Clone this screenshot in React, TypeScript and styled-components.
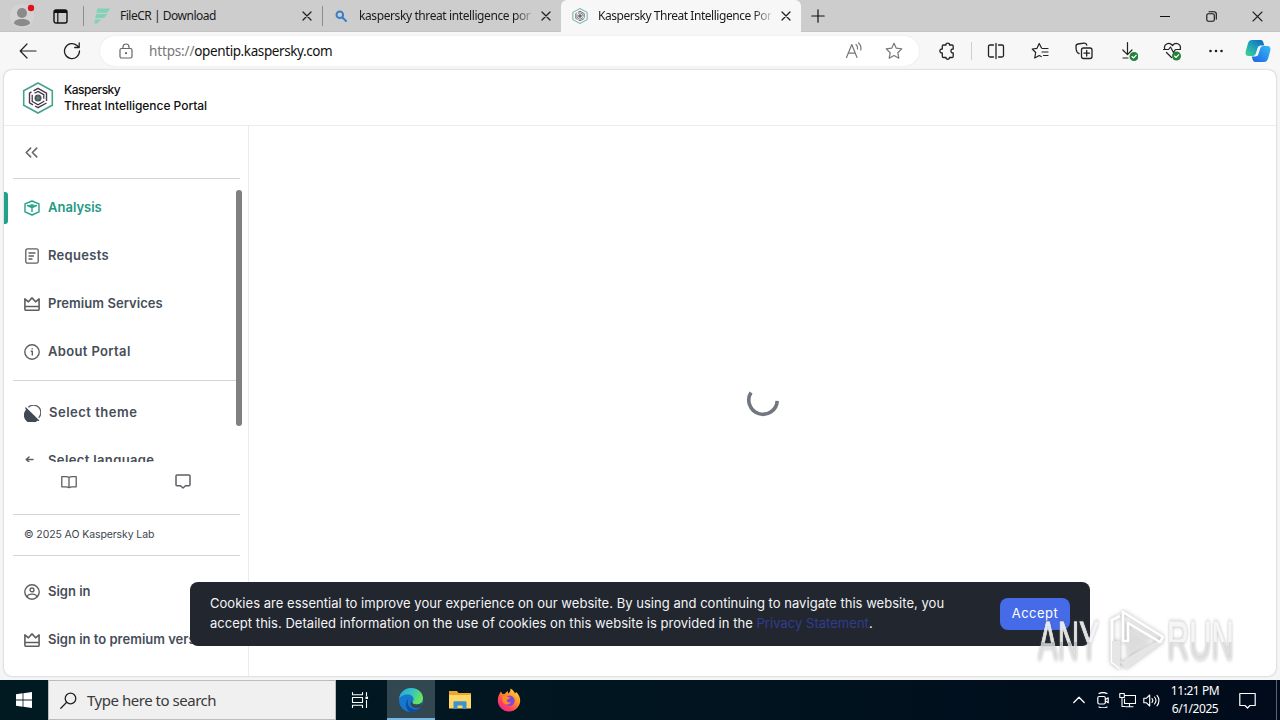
import type { ReactNode } from "react";
import styled, { createGlobalStyle, css } from "styled-components";
import { ChevronsLeft } from "lucide-react";

const GlobalStyle = createGlobalStyle`
  * {
    box-sizing: border-box;
  }
  body {
    margin: 0;
    overflow: hidden;
    font-family: "Open Sans", sans-serif;
  }
  svg {
    display: block;
    flex-shrink: 0;
  }
`;

const UI_FONT = `"Noto Sans", "Open Sans", sans-serif`;
const SITE_FONT = `Inter, sans-serif`;

const Screen = styled.div`
  position: relative;
  display: flex;
  flex-direction: column;
  width: 1280px;
  height: 720px;
  overflow: hidden;
  background: #f4f5f6;
`;

/* ---------- browser tabs ---------- */

const TabStrip = styled.div`
  display: flex;
  height: 32px;
  flex-shrink: 0;
  background: #cdcdcd;
  border-bottom: 1px solid #c3c3c3;
`;

const StripButton = styled.div<{ $width: number }>`
  display: flex;
  align-items: center;
  justify-content: center;
  width: ${({ $width }) => $width}px;
  height: 32px;
`;

const WorkspaceButton = styled(StripButton)`
  padding-right: 7px;
`;

const Tab = styled.div<{ $active?: boolean }>`
  display: flex;
  align-items: center;
  width: ${({ $active }) => ($active ? 240 : 239)}px;
  height: 32px;
  padding: 0 10px 0 11px;
  position: relative;
  ${({ $active }) =>
    $active &&
    css`
      background: #f7f7f7;
      border-radius: 6px 6px 0 0;
    `}
`;

const TabDivider = styled.span`
  position: absolute;
  left: 0;
  top: 6px;
  width: 1px;
  height: 20px;
  background: #8d8d8d;
`;

const TabTitle = styled.span<{ $spacing: number; $fade?: boolean }>`
  flex: 1;
  margin: 0 10px 0 10px;
  overflow: hidden;
  white-space: nowrap;
  font-family: ${UI_FONT};
  font-size: 12px;
  line-height: 18px;
  letter-spacing: ${({ $spacing }) => $spacing}px;
  color: #1a1a1a;
  ${({ $fade }) =>
    $fade &&
    css`
      mask-image: linear-gradient(to right, #000 155px, transparent 177px);
    `}
`;

const WindowControls = styled.div`
  display: flex;
  margin-left: auto;
`;

/* ---------- address row ---------- */

const Toolbar = styled.div`
  display: flex;
  align-items: center;
  height: 38px;
  flex-shrink: 0;
  padding-left: 6px;
  background: #f7f7f7;
`;

const ToolButton = styled.div<{ $width?: number }>`
  display: flex;
  align-items: center;
  justify-content: center;
  width: ${({ $width = 44 }) => $width}px;
  height: 30px;
  flex-shrink: 0;
`;

const AddressBar = styled.div`
  display: flex;
  align-items: center;
  width: 819px;
  height: 30px;
  flex-shrink: 0;
  margin: 0 6px;
  padding: 0 16px 0 18px;
  border-radius: 15px;
  background: #fff;
  box-shadow: 0 0 2px #e2e2e2;
`;

const Url = styled.span`
  flex: 1;
  margin-left: 15px;
  font-family: ${UI_FONT};
  font-size: 13.5px;
  line-height: 20px;
  letter-spacing: -0.4px;
  color: #111;
`;

const UrlScheme = styled.span`
  color: #777;
  letter-spacing: -0.15px;
`;

const AddressActions = styled.div`
  display: flex;
  gap: 22px;
`;

const ToolDivider = styled.span`
  width: 1px;
  height: 18px;
  margin: 0 2px 0 2px;
  flex-shrink: 0;
  background: #cfcfcf;
`;

/* ---------- page ---------- */

const Page = styled.div`
  display: flex;
  flex-direction: column;
  width: 1272px;
  height: 606px;
  margin: 0 4px 4px;
  flex-shrink: 0;
  overflow: hidden;
  border-radius: 8px;
  background: #fff;
  box-shadow: 0 0 2px #a9a9a9;
`;

const PageHeader = styled.header`
  display: flex;
  align-items: center;
  gap: 10px;
  height: 56px;
  padding-left: 18px;
  border-bottom: 1px solid #ececec;
`;

const Brand = styled.div`
  display: flex;
  flex-direction: column;
`;

const BrandLine = styled.span<{ $spacing: number }>`
  font-family: ${SITE_FONT};
  font-size: 12px;
  font-weight: 500;
  line-height: 16px;
  letter-spacing: ${({ $spacing }) => $spacing}px;
  color: #111;
`;

const PageBody = styled.div`
  display: flex;
  flex: 1;
  min-height: 0;
`;

const Sidebar = styled.aside`
  display: flex;
  flex-direction: column;
  width: 245px;
  border-right: 1px solid #ececec;
`;

const Collapse = styled.div`
  display: flex;
  align-items: center;
  height: 52px;
  padding-left: 17px;
  color: #666;
`;

const Rule = styled.hr`
  width: 227px;
  height: 1px;
  flex-shrink: 0;
  margin: 0 0 0 9px;
  border: none;
  background: #d3d5d7;
`;

const NavScroll = styled.nav`
  position: relative;
  height: 283px;
  flex-shrink: 0;
  padding-top: 5px;
  overflow: hidden;
`;

const ScrollThumb = styled.span`
  position: absolute;
  right: 6px;
  top: 11px;
  width: 6px;
  height: 236px;
  border-radius: 3px;
  background: #808080;
`;

const NavGroup = styled.div<{ $padding: string }>`
  padding: ${({ $padding }) => $padding};
`;

const NavRow = styled.div<{ $active?: boolean }>`
  position: relative;
  display: flex;
  align-items: center;
  gap: 8px;
  height: 48px;
  padding-left: 20px;
  white-space: nowrap;
  color: ${({ $active }) => ($active ? "#1fa28a" : "#5c5f64")};

  ${({ $active }) =>
    $active &&
    css`
      &::before {
        content: "";
        position: absolute;
        left: 0;
        top: 8px;
        width: 4px;
        height: 32px;
        border-radius: 0 3px 3px 0;
        background: #1fa28a;
      }
    `}
`;

const NavLabel = styled.span<{ $active?: boolean; $spacing?: number }>`
  margin-top: -3px;
  font-family: ${SITE_FONT};
  font-size: 13px;
  font-weight: 600;
  line-height: 20px;
  letter-spacing: ${({ $spacing = 0 }) => $spacing}px;
  color: ${({ $active }) => ($active ? "#239a85" : "#464e58")};
`;

const QuickLinks = styled.div`
  display: flex;
  justify-content: space-between;
  height: 52px;
  padding: 12px 57px 0;
  color: #5c5f64;
`;

const Copyright = styled.div`
  height: 40px;
  padding-left: 20px;
  font-family: ${SITE_FONT};
  font-size: 10.5px;
  line-height: 39px;
  letter-spacing: -0.1px;
  color: #3e4650;
`;

const Main = styled.main`
  display: flex;
  flex: 1;
  align-items: center;
  justify-content: center;
  padding-top: 3px;
`;

/* ---------- overlays ---------- */

const CookieBanner = styled.div`
  position: absolute;
  left: 190px;
  top: 582px;
  display: flex;
  align-items: center;
  justify-content: space-between;
  width: 900px;
  height: 64px;
  padding: 0 20px;
  border-radius: 8px;
  background: #22272f;
`;

const CookieText = styled.div`
  padding-bottom: 2px;
  font-family: ${SITE_FONT};
  font-size: 13px;
  line-height: 20px;
  white-space: nowrap;
  color: #f3f4f6;
`;

const CookieLine = styled.div<{ $spacing: number }>`
  letter-spacing: ${({ $spacing }) => $spacing}px;
`;

const CookieLink = styled.span`
  color: #303c8f;
`;

const AcceptButton = styled.button`
  width: 70px;
  height: 32px;
  padding: 0 0 3px;
  border: none;
  border-radius: 8px;
  background: #456be9;
  font-family: ${SITE_FONT};
  font-size: 13px;
  font-weight: 400;
  letter-spacing: 0.5px;
  color: #fff;
`;

const Watermark = styled.div`
  position: absolute;
  left: 1038px;
  top: 608px;
  display: flex;
  align-items: center;
  width: 196px;
  height: 66px;
`;

const WatermarkWord = styled.div<{ $scale: number }>`
  width: 120px;
  white-space: nowrap;
  font-family: "Liberation Sans", sans-serif;
  font-size: 53px;
  line-height: 66px;
  color: transparent;
  background: linear-gradient(rgba(255, 255, 255, 0.85) 51%, rgba(226, 226, 226, 0.75) 51%);
  background-clip: text;
  -webkit-text-stroke: 1px rgba(240, 240, 240, 0.6);
  filter: drop-shadow(0 0 2px rgba(90, 90, 90, 0.5));
  transform: scaleX(${({ $scale }) => $scale});
  transform-origin: left center;
`;

const WatermarkSlot = styled.span<{ $width: number }>`
  width: ${({ $width }) => $width}px;
  flex-shrink: 0;
`;

/* ---------- taskbar ---------- */

const Taskbar = styled.div`
  display: flex;
  height: 40px;
  flex-shrink: 0;
  background: linear-gradient(to right, #011a22, #011520 50%, #010b1b);
`;

const TaskButton = styled.div<{ $active?: boolean; $gap?: number }>`
  display: flex;
  align-items: center;
  justify-content: center;
  width: 48px;
  height: 40px;
  margin-left: ${({ $gap = 0 }) => $gap}px;
  ${({ $active }) =>
    $active &&
    css`
      background: #334750;
      box-shadow: inset 0 -2px #78b8e6;
    `}
`;

const SearchBox = styled.div`
  display: flex;
  align-items: center;
  gap: 10px;
  width: 288px;
  height: 40px;
  padding-left: 11px;
  border: 1px solid #bcbcbc;
  background: #f0f0f0;
  font-family: ${UI_FONT};
  font-size: 15px;
  letter-spacing: -0.47px;
  color: #3a3a3a;
`;

const Tray = styled.div`
  display: flex;
  align-items: center;
  margin-left: auto;
  color: #fff;
`;

const TrayIcon = styled.div`
  display: flex;
  align-items: center;
  justify-content: center;
  width: 24px;
`;

const Clock = styled.div`
  width: 64px;
  text-align: center;
  font-family: ${UI_FONT};
  font-size: 12px;
  line-height: 18px;
  letter-spacing: -0.45px;
`;

const ShowDesktop = styled.div`
  width: 4px;
  height: 40px;
  margin-left: 5px;
  border-left: 1px solid #596471;
`;

/* ---------- icons ---------- */

type StrokeProps = {
  size?: number;
  width?: number;
  color?: string;
  children: ReactNode;
};

const Stroke = ({ size = 18, width = 1.2, color = "currentColor", children }: StrokeProps) => (
  <svg
    width={size}
    height={size}
    viewBox={`0 0 ${size} ${size}`}
    fill="none"
    stroke={color}
    strokeWidth={width}
    strokeLinecap="round"
    strokeLinejoin="round"
  >
    {children}
  </svg>
);

const CloseIcon = ({ size = 8, width = 1.3 }: { size?: number; width?: number }) => (
  <Stroke size={size + 2} width={width} color="#222">
    <path d={`M1 1l${size} ${size}M${size + 1} 1l-${size} ${size}`} />
  </Stroke>
);

const KasperskyLogo = ({ size }: { size: number }) => (
  <svg width={size} height={size} viewBox="0 0 32 32" fill="none">
    <path d="M16 1l14.3 7.7v14.6L16 31 1.7 23.3V8.7z" stroke="#45a28b" strokeWidth="1.6" />
    <path
      d="M11.5 8.8L16 6.3l8.5 4.800v8M24.5 21L16 25.7l-3-1.700M11 22.900l-3.500-2v-9.800l2-1.200"
      stroke="#4a3a4c"
      strokeWidth="1.4"
    />
    <path
      d="M12.5 11.200L16 9.400l5.800 3.300v4M21.800 18.800v.6L16 22.700l-5.800-3.300v-6.700"
      stroke="#35303c"
      strokeWidth="1.2"
    />
    <circle cx="16" cy="16" r="3.500" fill="#47504f" />
    <path d="M16 13v6M13.500 14.500l5 3M18.500 14.500l-5 3" stroke="#8fa39d" strokeWidth=".5" />
  </svg>
);

const ProfileIcon = () => (
  <svg width="26" height="26" viewBox="0 0 26 26">
    <circle cx="13" cy="13" r="12" fill="#d3d3d3" />
    <circle cx="13" cy="10" r="5" fill="#8a8a8a" />
    <path d="M5 20.500c0-3 3-4.500 8-4.500s8 1.500 8 4.500c-2 2-5 2.700-8 2.700s-6-.7-8-2.700z" fill="#8a8a8a" />
    <circle cx="22" cy="5" r="3.200" fill="#e0101c" />
  </svg>
);

const WorkspaceIcon = () => (
  <svg width="15" height="15" viewBox="0 0 15 15">
    <rect x="1" y="1" width="13" height="13" rx="2" fill="none" stroke="#111" strokeWidth="1.4" />
    <path d="M1 4V3c0-1.300.7-2 2-2h9c1.300 0 2 .7 2 2v1z" fill="#111" />
    <path d="M4.800 4v10" stroke="#111" strokeWidth="1.2" />
  </svg>
);

const CrownIcon = () => (
  <Stroke size={16} width={1.6}>
    <path d="M.9 10.500V2.900l3.500 2.900L8 1.900l3.600 3.900 3.500-2.900v7.600zM.9 10.500v2.700c0 .7.400 1.100 1.100 1.100h12c.7 0 1.100-.4 1.100-1.100v-2.700" />
  </Stroke>
);

const AnalysisIcon = () => (
  <Stroke size={16} width={1.4}>
    <path d="M8 1l7 2.800v8.100L8 15l-7-3.100V3.800z" />
    <path d="M3.500 5.500L8 7.500l4.500-2M8 7.500v4" />
    <path d="M5.500 5.300L8 4.400l2.500.9L8 6.500z" fill="currentColor" strokeWidth=".6" />
  </Stroke>
);

const RequestsIcon = () => (
  <Stroke size={16} width={1.3}>
    <rect x="1.800" y=".8" width="12.400" height="14.400" rx="1.800" />
    <path d="M5 5h6M5 8h4.500M5 11h3" />
  </Stroke>
);

const InfoIcon = () => (
  <Stroke size={16} width={1.4}>
    <circle cx="8" cy="8" r="7.200" />
    <path d="M7.300 7.300H8.300V11M8.200 4.700v.2" />
  </Stroke>
);

const ThemeIcon = () => (
  <svg width="17" height="17" viewBox="0 0 17 17" fill="none">
    <path d="M4.300 2.300A7.300 7.300 0 0 1 14.700 12.700" stroke="#5c6066" strokeWidth="1.300" />
    <path d="M1.600 2l13.800 13.600-1 .6-.8-.6A7.700 7.700 0 0 1 2 4.700l-.8-1.400z" fill="#414957" />
  </svg>
);

const LanguageIcon = () => (
  <Stroke size={16} width={1.5}>
    <path d="M9 6.500H2.500M5 4L2.200 6.500 5 9M7 14h6" />
  </Stroke>
);

const UserIcon = () => (
  <Stroke size={16} width={1.4}>
    <circle cx="8" cy="8" r="7.200" />
    <circle cx="8" cy="5.900" r="1.900" />
    <path d="M3.300 13c0-2 1.700-2.900 4.700-2.900s4.700.9 4.700 2.900" />
  </Stroke>
);

const BookIcon = () => (
  <Stroke size={16} width={1.3}>
    <path d="M8 3.500C7 2.800 5.800 2.700 4.500 2.700H.8v10.100h4c1.300 0 2.300.2 3.200.8.900-.6 1.900-.8 3.200-.8h4V2.700h-3.700C10.200 2.700 9 2.800 8 3.500zM8 3.500v10" />
  </Stroke>
);

const CommentIcon = () => (
  <Stroke size={16} width={1.5}>
    <path d="M2 .9h12c.6 0 1 .4 1 1v8.900c0 .6-.4 1-1 1h-3.500L8 14l-2.500-2.200H2c-.6 0-1-.4-1-1V1.900c0-.6.400-1 1-1z" />
  </Stroke>
);

const CheckBadge = ({ x, y }: { x: number; y: number }) => (
  <>
    <circle cx={x} cy={y} r="4.500" fill="#23823b" stroke="none" />
    <path d={`M${x - 2} ${y}l1.500 1.500 2.700-2.800`} stroke="#fff" strokeWidth="1.1" />
  </>
);

const CopilotIcon = () => (
  <svg width="26" height="24" viewBox="0 0 26 24">
    <defs>
      <linearGradient id="copA" x1="0" y1="1" x2="1" y2="0">
        <stop offset="0" stopColor="#43d68d" />
        <stop offset=".45" stopColor="#21a7b7" />
        <stop offset="1" stopColor="#0c60c5" />
      </linearGradient>
      <linearGradient id="copB" x1="0" y1="1" x2="1" y2="0">
        <stop offset="0" stopColor="#1c63e5" />
        <stop offset="1" stopColor="#35baf5" />
      </linearGradient>
    </defs>
    <path d="M7 1h8.500c2 0 2.500 1 3 3l.8 2.500H16c-2 0-3 1-3.500 2.800L11 14c-.6 2-1.500 3-3.500 3H4c-3 0-4-2-3.200-5l2-7C3.500 2.300 4.800 1 7 1z" fill="url(#copA)" />
    <path d="M19 23h-8.500c-2 0-2.500-1-3-3l-.8-2.500H10c2 0 3-1 3.500-2.800L15 10c.6-2 1.500-3 3.500-3H22c3 0 4 2 3.200 5l-2 7c-.7 2.700-2 4-4.200 4z" fill="url(#copB)" />
  </svg>
);

const EdgeIcon = () => (
  <svg width="26" height="26" viewBox="0 0 26 26">
    <defs>
      <linearGradient id="edgeTop" x1="0" y1="0" x2="1" y2=".4">
        <stop offset="0" stopColor="#2aa3dc" />
        <stop offset=".55" stopColor="#35c5c0" />
        <stop offset="1" stopColor="#68e35c" />
      </linearGradient>
    </defs>
    <circle cx="13" cy="13" r="12" fill="#1677cf" />
    <path d="M1 12C2 5 7 1 13 1c7 0 12 4.700 12 10.200 0 4-3 6.300-6.500 6.300-3 0-4.500-1.200-4.200-2.200.3-.8 1.300-1.400 1.300-3.300C15.600 9.500 13 7.500 9.800 7.500 5.500 7.500 2 9.300 1 12z" fill="url(#edgeTop)" />
    <path d="M10.500 11.500c-2 3.500-.5 9.500 5.500 10.800 3 .6 5.500-.5 7-2.300C20.800 23.500 17 25.300 12.500 25 8 23.500 6 15.500 10.500 11.500z" fill="#0c4e9f" />
    <path d="M14.300 15.300c-.3 1 1.200 2.200 4.200 2.200 2 0 4-.8 5.300-2.200l-.5 4.200c-2 2-7 2.500-9.500 0-1.500-1.500-1.500-4-.5-6z" fill="#334750" />
  </svg>
);

const FolderIcon = () => (
  <svg width="22" height="20" viewBox="0 0 22 20">
    <path d="M0 1h8l1.500 2H22v15H0z" fill="#e7a733" />
    <path d="M0 5h22v13.500H0z" fill="#ffd766" />
    <path d="M4.500 19v-6.500c0-.8.500-1.300 1.300-1.300h10.400c.8 0 1.300.5 1.300 1.300V19h-4v-3.500h-5V19z" fill="#3f92ce" />
  </svg>
);

const FirefoxIcon = () => (
  <svg width="24" height="24" viewBox="0 0 24 24">
    <defs>
      <linearGradient id="ffx" x1="1" y1="0" x2=".2" y2="1">
        <stop offset="0" stopColor="#ffec45" />
        <stop offset=".4" stopColor="#ff9a26" />
        <stop offset=".75" stopColor="#ff4257" />
        <stop offset="1" stopColor="#e8259d" />
      </linearGradient>
    </defs>
    <path d="M4 3.500L5.500 6 8 5.700C9 4 10 3.500 11 3.200L11 5.500C13 4.500 13.500 2.500 13.500.5c2.500 1.200 4 3.500 4.500 5l1.200-1.600C22 6.500 23.200 9.500 23.200 12.500c0 6-5 11-11.200 11S.8 18.500.8 12.500C.8 9 2 6 4 3.500z" fill="url(#ffx)" />
    <circle cx="12.500" cy="12.800" r="5.200" fill="#8446d8" />
    <path d="M5 8.500c3-1.500 5-.8 6.500.8l2 .3c-.8 1.500-3.500 1.400-3.800 3 0 1.800 2.500 2.500 4.300 1.500-1 3.200-6.500 3.500-8-.1z" fill="#ff8a2a" />
  </svg>
);

const PlayMark = () => (
  <svg width="62" height="66" viewBox="0 0 62 66" fill="none">
    <g style={{ filter: "drop-shadow(0 0 2px rgba(90,90,90,.5))" }} strokeLinejoin="round">
      <path d="M13 51l9 10 37-27-2-3-34 19-4 4z" fill="#e9e9e9" fillOpacity=".9" />
      <path d="M16 8l-8 4v42l8 6" stroke="#fff" strokeWidth="3" />
      <path d="M8 33v21l8 6V33" fill="#e6e6e6" />
      <path d="M23 20l23 13-23 15z" fill="#e3e3e3" fillOpacity=".8" />
      <path d="M19 33V4l40 25-3 5-32-19v18z" stroke="#fff" strokeWidth="2.600" />
    </g>
  </svg>
);

type NavItem = { label: string; icon: ReactNode; active?: boolean; spacing?: number };

const mainNav: NavItem[] = [
  { label: "Analysis", icon: <AnalysisIcon />, active: true },
  { label: "Requests", icon: <RequestsIcon />, spacing: 0.3 },
  { label: "Premium Services", icon: <CrownIcon />, spacing: 0.05 },
  { label: "About Portal", icon: <InfoIcon />, spacing: 0.35 },
];

const settingsNav: NavItem[] = [
  { label: "Select theme", icon: <ThemeIcon />, spacing: 0.5 },
  { label: "Select language", icon: <LanguageIcon />, spacing: 0.37 },
];

const accountNav: NavItem[] = [
  { label: "Sign in", icon: <UserIcon /> },
  { label: "Sign in to premium version", icon: <CrownIcon /> },
];

const NavList = ({ items, padding = "0" }: { items: NavItem[]; padding?: string }) => (
  <NavGroup $padding={padding}>
    {items.map((item) => (
      <NavRow key={item.label} $active={item.active}>
        {item.icon}
        <NavLabel $active={item.active} $spacing={item.spacing}>
          {item.label}
        </NavLabel>
      </NavRow>
    ))}
  </NavGroup>
);

const BrowserTabs = () => (
  <TabStrip>
    <StripButton $width={44}>
      <ProfileIcon />
    </StripButton>
    <WorkspaceButton $width={39}>
      <WorkspaceIcon />
    </WorkspaceButton>
    <Tab>
      <TabDivider />
      <svg width="16" height="16" viewBox="0 0 16 16" fill="#80d2b8">
        <path d="M3.500.5h13L13 4.700H2.300zM2.200 6h11l-3 4H1.200zM1.200 11.500h6l-4 4H0z" />
      </svg>
      <TabTitle $spacing={-0.48}>FileCR | Download</TabTitle>
      <CloseIcon />
    </Tab>
    <Tab>
      <TabDivider />
      <Stroke size={16} width={2} color="#3b7dc4">
        <circle cx="6.800" cy="6.800" r="3.300" />
        <path d="M9.500 9.500l3.500 3.500" />
      </Stroke>
      <TabTitle $spacing={-0.4} $fade>
        kaspersky threat intelligence portal
      </TabTitle>
      <CloseIcon />
    </Tab>
    <Tab $active>
      <KasperskyLogo size={16} />
      <TabTitle $spacing={-0.46} $fade>
        Kaspersky Threat Intelligence Portal
      </TabTitle>
      <CloseIcon />
    </Tab>
    <StripButton $width={34}>
      <Stroke size={14} color="#111">
        <path d="M7 .8v12.400M.8 7h12.400" />
      </Stroke>
    </StripButton>
    <WindowControls>
      <StripButton $width={46}>
        <Stroke size={10} color="#111" width={1}>
          <path d="M0 5.500h10" />
        </Stroke>
      </StripButton>
      <StripButton $width={46}>
        <Stroke size={11} color="#111" width={1.1}>
          <rect x=".8" y="2.800" width="7.500" height="7.500" rx="1.500" />
          <path d="M3 .8h5c1.500 0 2.300.8 2.300 2.300v5" />
        </Stroke>
      </StripButton>
      <StripButton $width={46}>
        <CloseIcon size={9} width={1.1} />
      </StripButton>
    </WindowControls>
  </TabStrip>
);

const AddressRow = () => (
  <Toolbar>
    <ToolButton>
      <Stroke color="#222">
        <path d="M17 9H1.500M8 2L1.200 9 8 16" />
      </Stroke>
    </ToolButton>
    <ToolButton>
      <Stroke color="#222" width={1.3}>
        <path d="M16.500 9A7.500 7.500 0 1 1 14 3.500l1.800 1.700M16.200 1v4.500h-4.500" />
      </Stroke>
    </ToolButton>
    <AddressBar>
      <Stroke size={16} color="#666">
        <rect x="2" y="5.500" width="12" height="9.500" rx="1.500" />
        <path d="M5 5.500V4c0-4 6-4 6 0v1.500" />
        <circle cx="8" cy="10.200" r=".5" fill="#666" />
      </Stroke>
      <Url>
        <UrlScheme>https://</UrlScheme>opentip.kaspersky.com
      </Url>
      <AddressActions>
        <Stroke color="#777">
          <path d="M1.500 15.500L6.800 2.500l5.200 13M3.300 11.200h7M11 2.500c1.300 1 1.800 2.500 1.500 4.500M13.500 1c2 1.700 2.800 4 2.300 7" />
        </Stroke>
        <Stroke color="#777">
          <path d="M9 1.200l2.300 5 5.500.7-4 3.800 1 5.500L9 13.500l-4.800 2.700 1-5.500-4-3.800 5.500-.7z" />
        </Stroke>
      </AddressActions>
    </AddressBar>
    <ToolButton>
      <Stroke color="#222" width={1.3}>
        <path d="M5.500 3H8c-.3-2.500 3.800-2.500 3.500 0H14c.8 0 1.200.4 1.200 1.200V7c-3-.3-3 4.300 0 4v3.300c0 .8-.4 1.200-1.200 1.200h-2.500c.2 2.300-3.700 2.300-3.500 0H5.500c-.8 0-1.200-.4-1.200-1.200V11C1.100 11.300 1.100 6.700 4.300 7V4.200C4.300 3.400 4.700 3 5.500 3z" />
      </Stroke>
    </ToolButton>
    <ToolDivider />
    <ToolButton>
      <Stroke color="#222" width={1.3}>
        <path d="M6.500 3H3C2 3 1.500 3.500 1.500 4.500v9c0 1 .5 1.500 1.500 1.500h3.500M11.500 3H15c1 0 1.500.5 1.500 1.500v9c0 1-.5 1.500-1.500 1.500h-3.500M9 1.500v15" />
      </Stroke>
    </ToolButton>
    <ToolButton>
      <Stroke color="#222">
        <path d="M10.500 6L8.200 1.500 6 6.300l-4.800.7 3.500 3.500-1 5.500 4.500-2.500 2 1M11.500 6.500h5.500M11 10h6M12.500 13.500H17" />
      </Stroke>
    </ToolButton>
    <ToolButton>
      <Stroke color="#222" width={1.3}>
        <rect x="6.500" y="6" width="10.500" height="10.500" rx="2" />
        <path d="M11.700 8.500v5.500M9 11.200h5.500M4 11.500C2 11 1.500 9.500 1.200 7.500L1 4.500C.9 3 1.500 2.300 3 2l6-.8c1.500-.2 2.500.3 2.800 2" />
      </Stroke>
    </ToolButton>
    <ToolButton>
      <Stroke size={20} color="#222">
        <path d="M9.500 1.500v12M4.800 9l4.700 4.700L14 9M5 17h5" />
        <CheckBadge x={16} y={15.5} />
      </Stroke>
    </ToolButton>
    <ToolButton>
      <Stroke size={20} color="#222">
        <path d="M3 8.500C.8 3.500 7 .3 10.500 4.500 14 .3 20 3.500 18 8.500M1.500 8.500h5L8.500 6l3 5.500 2-3h5M4.500 11.500l5 5" />
        <CheckBadge x={14.5} y={15} />
      </Stroke>
    </ToolButton>
    <ToolButton>
      <svg width="14" height="4" viewBox="0 0 14 4" fill="#222">
        <circle cx="1.500" cy="2" r="1.300" />
        <circle cx="7" cy="2" r="1.300" />
        <circle cx="12.500" cy="2" r="1.300" />
      </svg>
    </ToolButton>
    <ToolButton $width={40}>
      <CopilotIcon />
    </ToolButton>
  </Toolbar>
);

const PortalPage = () => (
  <Page>
    <PageHeader>
      <KasperskyLogo size={32} />
      <Brand>
        <BrandLine $spacing={-0.5}>Kaspersky</BrandLine>
        <BrandLine $spacing={-0.03}>Threat Intelligence Portal</BrandLine>
      </Brand>
    </PageHeader>
    <PageBody>
      <Sidebar>
        <Collapse>
          <ChevronsLeft size={21} strokeWidth={1.8} />
        </Collapse>
        <Rule />
        <NavScroll>
          <NavList items={mainNav} />
          <NavGroup $padding="4px 0 8px">
            <Rule />
          </NavGroup>
          <NavList items={settingsNav} />
          <ScrollThumb />
        </NavScroll>
        <QuickLinks>
          <BookIcon />
          <CommentIcon />
        </QuickLinks>
        <Rule />
        <Copyright>© 2025 AO Kaspersky Lab</Copyright>
        <Rule />
        <NavList items={accountNav} padding="12px 0 0" />
      </Sidebar>
      <Main>
        <svg width="34" height="34" viewBox="0 0 34 34" fill="none">
          <path d="M5 6.500A14.200 14.200 0 1 0 31.200 14.800" stroke="#70777e" strokeWidth="3.600" />
        </svg>
      </Main>
    </PageBody>
  </Page>
);

const CookieNotice = () => (
  <CookieBanner>
    <CookieText>
      <CookieLine $spacing={0.03}>
        Cookies are essential to improve your experience on our website. By using and continuing to navigate this website, you
      </CookieLine>
      <CookieLine $spacing={0.035}>
        accept this. Detailed information on the use of cookies on this website is provided in the{" "}
        <CookieLink>Privacy Statement</CookieLink>.
      </CookieLine>
    </CookieText>
    <AcceptButton>Accept</AcceptButton>
  </CookieBanner>
);

const WindowsTaskbar = () => (
  <Taskbar>
    <TaskButton>
      <svg width="16" height="16" viewBox="0 0 16 16" fill="#fff">
        <path d="M0 2.200l6.600-.9v6.300H0zM7.400 1.200L16 0v7.600H7.400zM0 8.400h6.600v6.300L0 13.800zM7.400 8.400H16V16l-8.600-1.200z" />
      </svg>
    </TaskButton>
    <SearchBox>
      <Stroke size={17} color="#222" width={1.3}>
        <circle cx="10.500" cy="6.500" r="5.300" />
        <path d="M6.700 10.300L.8 16.200" />
      </Stroke>
      Type here to search
    </SearchBox>
    <TaskButton>
      <Stroke color="#fff" width={1.1}>
        <path d="M1.500 1.500v2.300h10V1.500M1.500 16.500v-2.300h10v2.300M1.500 6.500h10v5h-10zM15.500 1.500v3M15.500 9.500v7" />
        <rect x="15" y="6" width="1.500" height="1.500" fill="#fff" />
      </Stroke>
    </TaskButton>
    <TaskButton $active $gap={3}>
      <EdgeIcon />
    </TaskButton>
    <TaskButton $gap={1}>
      <FolderIcon />
    </TaskButton>
    <TaskButton $gap={1}>
      <FirefoxIcon />
    </TaskButton>
    <Tray>
      <TrayIcon>
        <Stroke size={12} width={1.3}>
          <path d="M.8 8.500L6 3.300l5.200 5.200" />
        </Stroke>
      </TrayIcon>
      <TrayIcon>
        <Stroke size={16} width={1.2}>
          <rect x="2.800" y="4.500" width="7.500" height="7.500" rx="1.500" />
          <path d="M10.500 7.500l2.700-1.700v5l-2.700-1.700M4 1.500c2.500-1.200 5.500-1.200 8 0M4 15c2.500 1.200 5.500 1.200 8 0" />
        </Stroke>
      </TrayIcon>
      <TrayIcon>
        <Stroke size={17} width={1.1}>
          <path d="M5.500 3.500h11v8h-11V7M10.500 11.500v3M7 14.700h7M.8 1.500h4.500v4H.8zM3 5.500v9h3" />
        </Stroke>
      </TrayIcon>
      <TrayIcon>
        <Stroke size={17} width={1.1}>
          <path d="M.8 6.300h2.500L6.700 3v11L3.300 10.700H.8zM9 6.500c1 1.200 1 2.800 0 4M11.500 5c1.700 2 1.700 5 0 7M14 3.300c2.600 3 2.600 7.500 0 10.500" />
        </Stroke>
      </TrayIcon>
      <Clock>
        11:21 PM
        <br />
        6/1/2025
      </Clock>
      <TaskButton $gap={-4}>
        <Stroke size={17}>
          <path d="M.8 1.500h15.400v12H11L8.500 16 6 13.500H.8z" />
        </Stroke>
      </TaskButton>
      <ShowDesktop />
    </Tray>
  </Taskbar>
);

const App = () => (
  <>
    <GlobalStyle />
    <Screen>
      <BrowserTabs />
      <AddressRow />
      <PortalPage />
      <WindowsTaskbar />
      <CookieNotice />
      <Watermark>
        <WatermarkSlot $width={66}>
          <WatermarkWord $scale={0.56}>ANY</WatermarkWord>
        </WatermarkSlot>
        <WatermarkSlot $width={63}>
          <PlayMark />
        </WatermarkSlot>
        <WatermarkSlot $width={64}>
          <WatermarkWord $scale={0.58}>RUN</WatermarkWord>
        </WatermarkSlot>
      </Watermark>
    </Screen>
  </>
);

export default App;
